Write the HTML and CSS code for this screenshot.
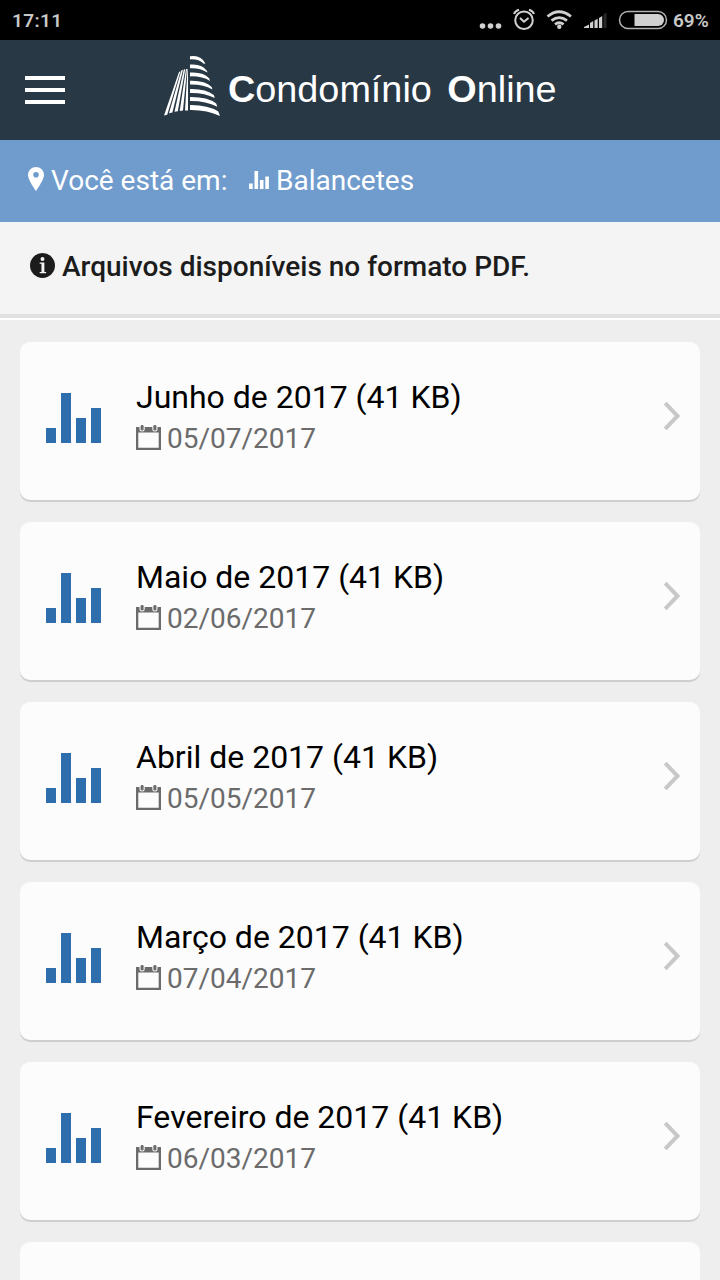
FILE: index.html
```html
<!DOCTYPE html>
<html lang="pt-BR">
<head>
<meta charset="utf-8">
<title>Condomínio Online</title>
<link rel="stylesheet" href="styles.css">
</head>
<body>
<svg class="defs" aria-hidden="true">
  <symbol id="bars" viewBox="0 0 55 50"><path d="M0 35h10v15H0zM15 0h10v50H15zM30 25h10v25H30zM45 15h10v35H45z"/></symbol>
  <symbol id="calendar" viewBox="0 0 25 26"><path fill-rule="evenodd" d="M0 2h3.500v2q0 2.500 2.600 2.500T8.700 4V2h7.600v2q0 2.500 2.600 2.500T21.500 4V2H25v23H0zM2.300 7.500V22.700h20.400V7.500z"/><rect x="4.600" y="0" width="3" height="5.500" rx="1.300"/><rect x="17.400" y="0" width="3" height="5.500" rx="1.300"/></symbol>
  <symbol id="chevron" viewBox="0 0 18 30"><path d="M2.200 2.200L14.500 15 2.200 27.800" fill="none" stroke="currentColor" stroke-width="4"/></symbol>
</svg>
<div class="status">
  <span class="time">17:11</span>
  <svg class="status-icons" viewBox="0 0 190 40">
    <g fill="#d0d0d0"><circle cx="4.500" cy="26" r="2.800"/><circle cx="12.500" cy="26" r="2.800"/><circle cx="20.500" cy="26" r="2.800"/></g>
    <g fill="none" stroke="#d0d0d0" stroke-width="2"><circle cx="46" cy="20.300" r="8.800"/><path d="M36 14q1-3 5-4.200M56 14q-1-3-5-4.200M42 18l4 3.700 4.500-3.700"/></g>
    <g fill="none" stroke="#d0d0d0" stroke-width="2.800"><path d="M69.500 16.500q11.500-9.500 23.500 0M73.500 20.600q7.600-6 15.500 0M77 24.300q4.200-3.200 8.600 0"/></g><circle cx="81.300" cy="26.800" r="2.200" fill="#d0d0d0"/>
    <path fill="#d0d0d0" d="M106 28v-1l5-2.500V28zM112 28v-5l3.200-2v7zM116.500 28v-7.500l3.200-1.800V28zM121 28V18l3.200-2v12z"/><path fill="#292929" d="M125.500 28V14.500l3-2V28z"/>
    <rect x="141.500" y="11.500" width="47" height="17" rx="8.500" fill="none" stroke="#b0b0b0" stroke-width="1.500"/>
    <path fill="#d0d0d0" d="M156.500 14H180a6 6 0 0 1 0 12h-23.500z"/>
  </svg>
  <span class="percent">69%</span>
</div>
<header class="header">
  <div class="menu"><span></span><span></span><span></span></div>
  <svg class="logo" viewBox="163 54 58 64" fill="#fff">
    <path d="M190 56.300q11-1.800 15.400 7.200l-1.600.3q-5-4.800-13.800-4.400zM190 64.500q12.500-1 17 6.500l.4 1.600q-7.500-5-17.400-4.400zM190 72.600q14-.8 19.300 6l.7 2.400q-8-5-20-4.600zM190 80.700q15-.5 21.700 6.300l.7 2.500q-9-5.200-22.400-4.900zM190 88.900q16-.4 23.800 6.200l1 2.900q-10-5.400-24.800-5.100zM190 97q17-.3 26.200 6.400l1.100 3.300q-12-5.900-27.300-5.600zM190 105q18-.2 28.300 6.500l1.700 4.600q-13-6.500-30-6.200z"/>
    <path d="M179 72l-15 43.500 3.200-.8L180.500 71.200zM181.300 70.500l-12.300 42.700 3.400-.7L183 69.800zM183.800 69.500l-9.300 42.300 3.300-.6L185.200 69.200zM186 69l-6.300 41.900 3.300-.3L187 69zM187.500 69l-2.500 41.500h3V69z"/>
  </svg>
  <div class="brand"><b>C</b>ondomínio <b class="second">O</b>nline</div>
</header>
<nav class="crumb">
  <svg class="pin" viewBox="0 0 16 24"><path fill="#fff" fill-rule="evenodd" d="M8 0a8 8 0 0 0-8 8c0 5 8 16 8 16s8-11 8-16a8 8 0 0 0-8-8m0 5a2.800 2.800 0 1 1 0 5.600A2.800 2.800 0 0 1 8 5"/></svg>
  <span class="where">Você está em:</span>
  <svg class="crumb-bars"><use href="#bars"/></svg>
  <span class="page">Balancetes</span>
</nav>
<div class="notice">
  <svg class="info" viewBox="0 0 24 24"><circle cx="12" cy="12" r="12" fill="#1c1c1c"/><circle cx="12" cy="5.800" r="1.900" fill="#f4f4f4"/><path fill="#f4f4f4" d="M9.300 9h4.500v9.300h1.700v1.200H9.300v-1.200h1.700v-8H9.300z"/></svg>
  <span class="notice-text">Arquivos disponíveis no formato PDF.</span>
</div>
<main class="list">
  <article class="card"><svg class="chart"><use href="#bars"/></svg><div class="body"><div class="name">Junho de 2017 (41 KB)</div><div class="date"><svg class="cal"><use href="#calendar"/></svg><span>05/07/2017</span></div></div><svg class="chev"><use href="#chevron"/></svg></article>
  <article class="card"><svg class="chart"><use href="#bars"/></svg><div class="body"><div class="name">Maio de 2017 (41 KB)</div><div class="date"><svg class="cal"><use href="#calendar"/></svg><span>02/06/2017</span></div></div><svg class="chev"><use href="#chevron"/></svg></article>
  <article class="card"><svg class="chart"><use href="#bars"/></svg><div class="body"><div class="name">Abril de 2017 (41 KB)</div><div class="date"><svg class="cal"><use href="#calendar"/></svg><span>05/05/2017</span></div></div><svg class="chev"><use href="#chevron"/></svg></article>
  <article class="card"><svg class="chart"><use href="#bars"/></svg><div class="body"><div class="name">Março de 2017 (41 KB)</div><div class="date"><svg class="cal"><use href="#calendar"/></svg><span>07/04/2017</span></div></div><svg class="chev"><use href="#chevron"/></svg></article>
  <article class="card"><svg class="chart"><use href="#bars"/></svg><div class="body"><div class="name">Fevereiro de 2017 (41 KB)</div><div class="date"><svg class="cal"><use href="#calendar"/></svg><span>06/03/2017</span></div></div><svg class="chev"><use href="#chevron"/></svg></article>
  <article class="card partial"></article>
</main>
</body>
</html>
```
FILE: styles.css
```css
* { box-sizing: border-box; }
body { margin: 0; width: 720px; height: 1280px; overflow: hidden; background: #eee; font-family: Roboto, "Liberation Sans", sans-serif; white-space: nowrap; display: flex; flex-direction: column; }
svg { display: block; flex: none; }
.defs { display: none; }
.status { flex: none; height: 40px; background: #000; color: #c8c8c8; display: flex; align-items: center; padding-left: 12px; font-size: 19px; font-weight: 600; }
.time { width: 464px; letter-spacing: .4px; }
.status-icons { width: 190px; height: 40px; margin-left: 2px; }
.percent { margin-left: 5px; }
.header { flex: none; height: 100px; background: #293845; display: flex; align-items: center; padding-left: 25px; color: #fff; }
.menu { display: flex; flex-direction: column; gap: 8px; width: 40px; }
.menu span { height: 4px; background: #fff; }
.logo { width: 58px; height: 64px; margin: -8px 0 0 98px; }
.brand { margin: -2px 0 0 7px; font: 37.8px/50px "Liberation Sans", Arial, sans-serif; }
.second { margin-left: 5px; }
.crumb { flex: none; height: 82px; background: #709ccd; color: #fff; display: flex; align-items: center; padding: 0 0 2px 28px; font-size: 28px; }
.pin { width: 16px; height: 24px; margin-top: -2px; }
.where { margin-left: 7px; width: 177px; }
.crumb-bars { width: 20px; height: 18px; margin-left: 21px; fill: #fff; }
.page { margin-left: 7px; }
.notice { flex: none; height: 96px; background: #f4f4f4; border-bottom: 4px solid #e0e0e0; box-shadow: 0 2px #fff; margin-bottom: 2px; display: flex; padding: 28px 0 0 30px; color: #1c1c1c; font-size: 28px; line-height: 33px; font-weight: 500; }
.info { width: 25px; height: 25px; margin-top: 3px; }
.notice-text { margin-left: 7px; }
.list { padding: 22px 20px 0; display: flex; flex-direction: column; gap: 22px; }
.card { flex: none; height: 158px; border-radius: 10px; background: #fcfcfc; box-shadow: 0 2px #cecece; display: flex; align-items: flex-start; padding: 0 19px 0 26px; }
.partial { height: 38px; border-radius: 10px 10px 0 0; box-shadow: none; }
.chart { width: 55px; height: 50px; margin-top: 51px; fill: #2f6eac; }
.body { margin: 36px 0 0 35px; flex: 1; }
.name { font-size: 32px; line-height: 38px; color: #000; }
.date { display: flex; font-size: 28px; line-height: 33px; margin-top: 6px; color: #6b6b6b; }
.cal { width: 25px; height: 26px; margin: 3px 6px 0 0; fill: #6b6b6b; }
.chev { width: 18px; height: 30px; margin-top: 59px; color: #c8c8c8; }
```
